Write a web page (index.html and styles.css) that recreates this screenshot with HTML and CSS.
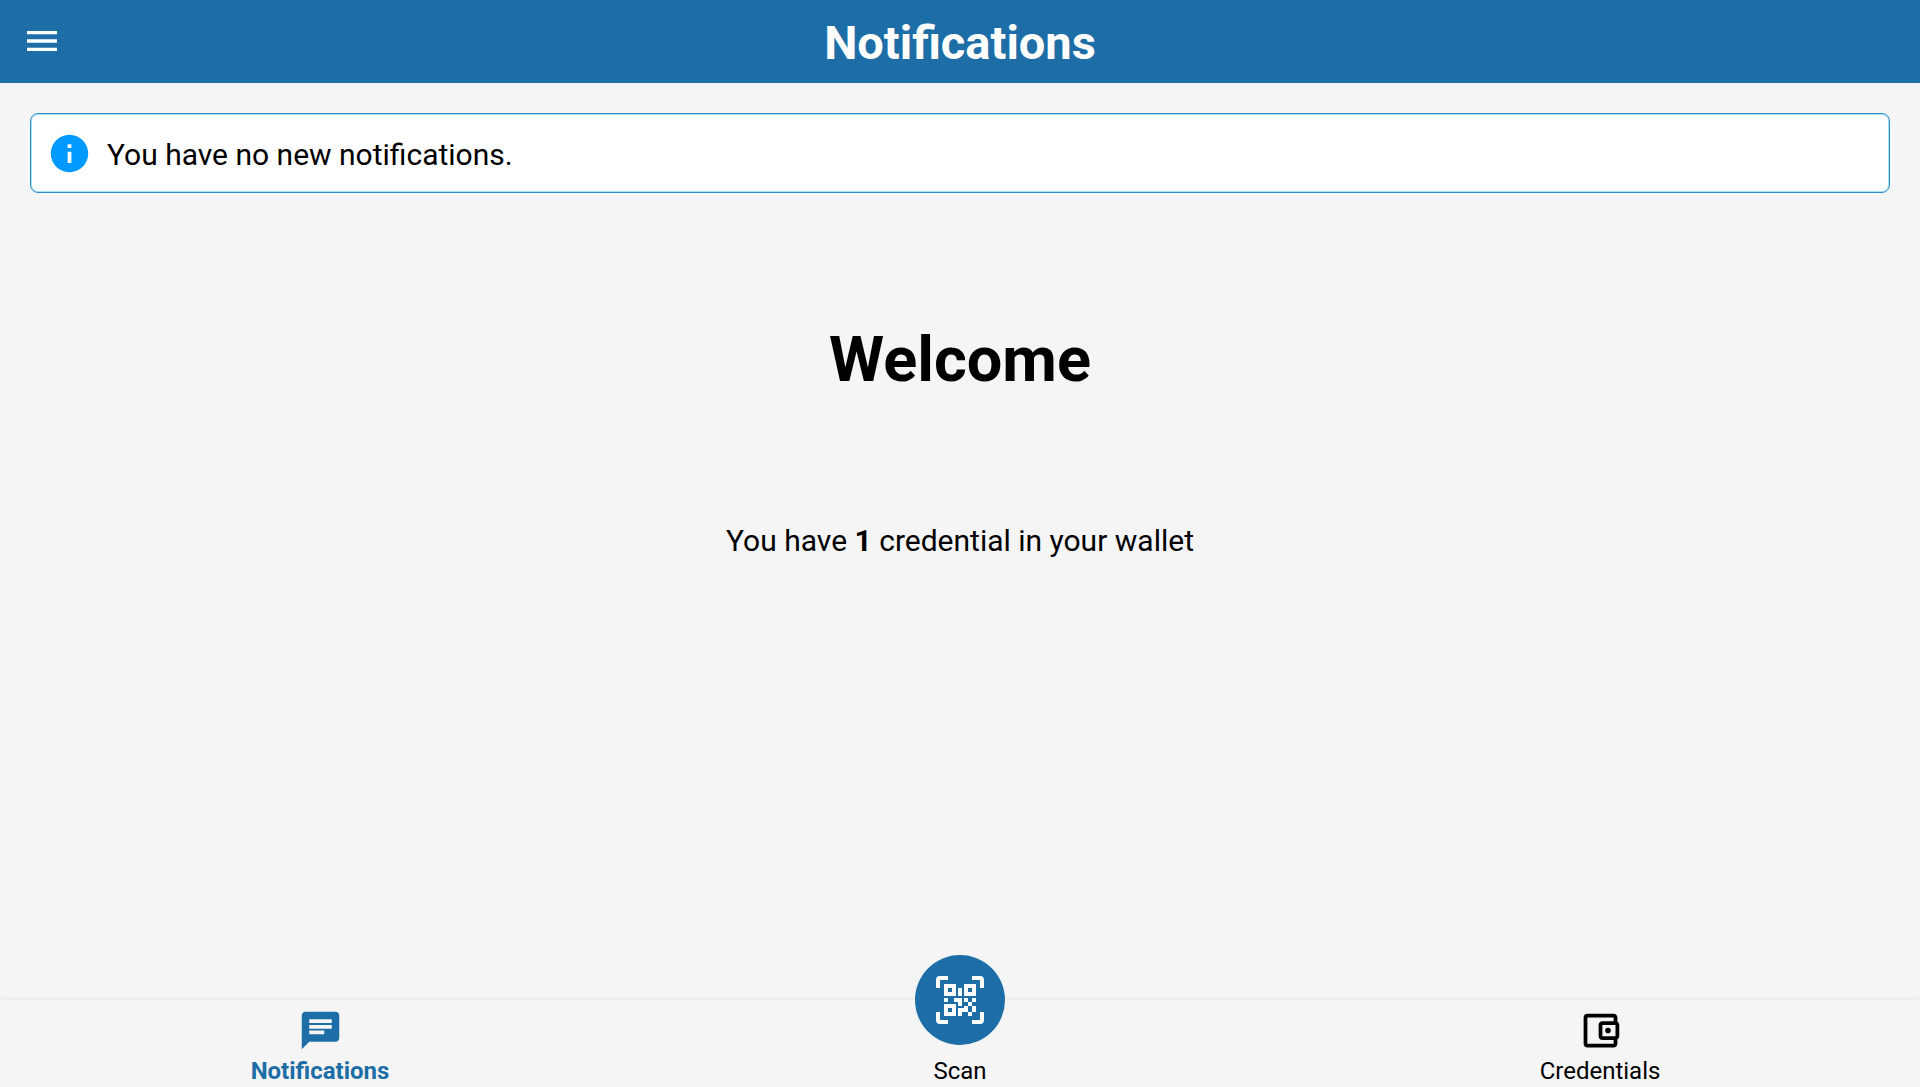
FILE: index.html
```html
<!DOCTYPE html>
<html lang="en">
<head>
<meta charset="utf-8">
<meta name="viewport" content="width=device-width, initial-scale=1">
<title>Notifications</title>
<link rel="stylesheet" href="styles.css">
</head>
<body>
<header class="header">
  <button class="menu-button" type="button" aria-label="Menu">
    <svg class="menu-icon" viewBox="0 0 24 24" aria-hidden="true"><path d="M3 18h18v-2H3v2zm0-5h18v-2H3v2zm0-7v2h18V6H3z"/></svg>
  </button>
  <h1 class="title">Notifications</h1>
</header>
<main class="content">
  <div class="notice" role="status">
    <svg class="notice-icon" viewBox="0 0 24 24" aria-hidden="true"><path d="M12 2C6.48 2 2 6.48 2 12s4.48 10 10 10 10-4.480 10-10S17.520 2 12 2zm1 15h-2v-6h2v6zm0-8h-2V7h2v2z"/></svg>
    <p class="notice-text">You have no new notifications.</p>
  </div>
  <h2 class="welcome">Welcome</h2>
  <p class="summary">You have <strong>1</strong> credential in your wallet</p>
</main>
<nav class="tabs">
  <a class="tab tab-active" href="#notifications" aria-current="page">
    <svg class="tab-icon" viewBox="0 0 24 24" aria-hidden="true"><path d="M20 2H4c-1.100 0-1.990.9-1.990 2L2 22l4-4h14c1.100 0 2-.9 2-2V4c0-1.100-.9-2-2-2zM6 9h12v2H6V9zm8 5H6v-2h8v2zm4-6H6V6h12v2z"/></svg>
    <span class="tab-label">Notifications</span>
  </a>
  <a class="tab" href="#scan">
    <span class="scan-disc">
      <svg class="scan-icon" viewBox="0 0 24 24" aria-hidden="true"><path d="M4,4H10V10H4V4M20,4V10H14V4H20M14,15H16V13H14V11H16V13H18V11H20V13H18V15H20V18H18V20H16V18H13V20H11V16H14V15M16,15V18H18V15H16M4,20V14H10V20H4M6,6V8H8V6H6M16,6V8H18V6H16M6,16V18H8V16H6M4,11H6V13H4V11M9,11H13V15H11V13H9V11M11,6H13V10H11V6M2,2V6H0V2A2,2 0 0,1 2,0H6V2H2M22,0A2,2 0 0,1 24,2V6H22V2H18V0H22M2,18V22H6V24H2A2,2 0 0,1 0,22V18H2M22,22V18H24V22A2,2 0 0,1 22,24H18V22H22Z"/></svg>
    </span>
    <span class="tab-label">Scan</span>
  </a>
  <a class="tab" href="#credentials">
    <svg class="tab-icon" viewBox="0 0 24 24" aria-hidden="true"><path d="M21 7.280V5c0-1.100-.9-2-2-2H5c-1.110 0-2 .9-2 2v14c0 1.100.89 2 2 2h14c1.100 0 2-.9 2-2v-2.280c.59-.35 1-.98 1-1.720V9c0-.74-.41-1.370-1-1.720zM20 9v6h-7V9h7zM5 19V5h14v2h-6c-1.100 0-2 .9-2 2v6c0 1.100.9 2 2 2h6v2H5z"/><circle cx="16" cy="12" r="1.500"/></svg>
    <span class="tab-label">Credentials</span>
  </a>
</nav>
</body>
</html>
```

FILE: styles.css
```css
* {
  box-sizing: border-box;
}

body {
  display: flex;
  flex-direction: column;
  min-height: 100vh;
  margin: 0;
  background: #f5f5f5;
  color: #000;
  font-family: Roboto, sans-serif;
  font-size: 30px;
  line-height: 36px;
}

svg {
  display: block;
  fill: currentColor;
}

h1,
h2,
p {
  margin: 0;
}

.header {
  display: grid;
  grid-template-columns: 64px 1fr 64px;
  align-items: start;
  padding: 13px 10px 10px;
  background: #1d6da6;
  color: #fff;
}

.menu-button {
  width: 64px;
  padding: 8px 12px;
  border: 0;
  background: none;
  color: inherit;
}

.menu-icon {
  width: 40px;
  height: 40px;
}

.title {
  padding: 2px 0;
  font-size: 47px;
  font-weight: 700;
  line-height: 56px;
  text-align: center;
}

.content {
  display: flex;
  flex: 1;
  flex-direction: column;
  padding: 30px;
}

.notice {
  display: flex;
  align-items: center;
  gap: 15px;
  padding: 16px;
  border: 1px solid #2f8fcb;
  border-radius: 8px;
  background: #fff;
  box-shadow: inset 0 0 0 1px #a5e0f8;
}

.notice-icon {
  width: 45px;
  height: 45px;
  color: #0099ff;
}

.notice-text {
  padding-top: 4px;
  line-height: 42px;
}

.welcome {
  margin-top: 129px;
  font-size: 63px;
  font-weight: 700;
  line-height: 76px;
  text-align: center;
}

.summary {
  margin-top: 125px;
  text-align: center;
}

.tabs {
  display: grid;
  grid-template-columns: repeat(3, 1fr);
  align-items: end;
  min-height: 87px;
  padding: 6px 0 2px;
  background: #f5f5f5;
  box-shadow: 0 -1px 5px rgba(0, 0, 0, 0.06);
}

.tab {
  display: flex;
  flex-direction: column;
  align-items: center;
  color: #000;
  text-decoration: none;
}

.tab-active {
  color: #1d6da6;
  font-weight: 700;
}

.tab-icon {
  width: 45px;
  height: 45px;
}

/* The disc straddles the top edge of the bar. */
.scan-disc {
  display: grid;
  place-items: center;
  width: 90px;
  height: 90px;
  margin: -52px 0 8px;
  border-radius: 50%;
  background: #1d6da6;
  color: #fff;
}

.scan-icon {
  width: 48px;
  height: 48px;
}

.tab-label {
  margin-top: 4px;
  font-size: 24px;
  line-height: 28px;
}
```
